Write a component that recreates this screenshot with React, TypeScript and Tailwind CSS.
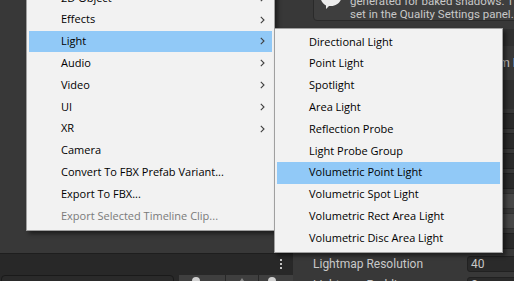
import { ReactNode } from 'react';

const mainItems = [
  { label: '2D Object', sub: true },
  { label: 'Effects', sub: true },
  { label: 'Light', sub: true, active: true },
  { label: 'Audio', sub: true },
  { label: 'Video', sub: true },
  { label: 'UI', sub: true },
  { label: 'XR', sub: true },
  { label: 'Camera' },
  { label: 'Convert To FBX Prefab Variant...' },
  { label: 'Export To FBX...' },
  { label: 'Export Selected Timeline Clip...', disabled: true },
];

const lightItems = [
  'Directional Light',
  'Point Light',
  'Spotlight',
  'Area Light',
  'Reflection Probe',
  'Light Probe Group',
  'Volumetric Point Light',
  'Volumetric Spot Light',
  'Volumetric Rect Area Light',
  'Volumetric Disc Area Light',
];

function Chevron() {
  return (
    <svg width="5" height="8" viewBox="0 0 5 8" className="shrink-0">
      <path d="M0.8 0.8 L4 4 L0.8 7.2" fill="none" stroke="#404040" strokeWidth="1.1" />
    </svg>
  );
}

function MenuRow({ children, active, disabled }: { children: ReactNode; active?: boolean; disabled?: boolean }) {
  return (
    <div
      className={`mx-[2px] h-[21.8px] flex items-center justify-between pl-[32px] pr-[7px] ${
        active ? 'bg-[#91c9f7]' : ''
      } ${disabled ? 'text-[#7a7a7a]' : 'text-black'}`}
    >
      {children}
    </div>
  );
}

function Field({ text, light }: { text?: string; light?: boolean }) {
  return (
    <div
      className={`h-[16px] w-full shrink-0 rounded-[3px] border px-[3px] text-[12px] leading-[14px] ${
        light ? 'bg-[#464646] border-[#303030]' : 'bg-[#2a2a2a] border-[#212121]'
      }`}
    >
      {text}
    </div>
  );
}

export default function App() {
  return (
    <div className="relative w-[514px] h-[281px] overflow-hidden bg-[#383838] font-['Roboto',sans-serif] text-[#c8c8c8]">
      <div className="flex h-full">
        {/* left: scene / hierarchy */}
        <div className="w-[293px] flex flex-col">
          <div className="flex-1 bg-[#383838]" />
          <div className="h-[21px] border-t border-[#1e1e1e] bg-[#282828] flex items-center justify-end pr-[11px]">
            <div className="flex flex-col gap-[2px]">
              <span className="w-[2px] h-[2px] bg-[#c4c4c4]" />
              <span className="w-[2px] h-[2px] bg-[#c4c4c4]" />
              <span className="w-[2px] h-[2px] bg-[#c4c4c4]" />
            </div>
          </div>
          <div className="h-[7px] bg-[#282828] flex items-start gap-[1px] pt-[1px]">
            <div className="w-[175px] h-[18px] rounded-[4px] border border-[#1a1a1a] bg-[#2a2a2a] ml-[1px]" />
            <div className="w-[3px]" />
            <div className="w-[46px] h-[18px] bg-[#3f3f3f] flex justify-center pt-[2px]">
              <span className="w-[8px] h-[8px] rounded-full bg-[#d0d0d0] -ml-[12px]" />
            </div>
            <div className="w-[33px] h-[18px] bg-[#3f3f3f] flex justify-center pt-[3px]">
              <span className="w-0 h-0 border-x-[4px] border-x-transparent border-b-[6px] border-b-[#8a8a8a]" />
            </div>
            <div className="w-[34px] h-[18px] bg-[#3f3f3f] flex justify-center pt-[2px]">
              <span className="w-[8px] h-[8px] rounded-full bg-[#d0d0d0] -ml-[8px]" />
            </div>
          </div>
        </div>
        <div className="w-[1px] bg-[#232323]" />
        {/* right: inspector */}
        <div className="flex-1 flex flex-col pl-[20px]">
          <div className="shrink-0 -mt-[20px] h-[41px] rounded-[4px] border border-[#2a2a2a] bg-[#3e3e3e] flex items-start gap-[7px] pl-[5px] overflow-hidden">
            {/* only the lower part of the info bubble is in view */}
            <svg width="24" height="9" viewBox="0 18 24 9" className="shrink-0 h-[9px] w-[24px] mt-[19px]">
              <path d="M12 1 C18.5 1 23 6 23 12.5 C23 19 18.5 24 12 24 L10 24 L7 27 L7 23.5 C3.5 22 1 17.5 1 12.5 C1 6 5.5 1 12 1 Z" fill="#ececec" />
            </svg>
            <div className="pt-[14px] text-[11.5px] leading-[13px] text-[#c8c8c8] whitespace-nowrap">
              <div>generated for baked shadows. The</div>
              <div>set in the Quality Settings panel.</div>
            </div>
          </div>
          <div className="shrink-0 mt-[8px] flex flex-col gap-[4px]">
            <div className="shrink-0 h-[17px] bg-[#303030]" />
            <div className="shrink-0 h-[26px] pl-[155px] flex items-center">
              <div className="text-[12px] whitespace-nowrap">Custom Res</div>
            </div>
            <div className="shrink-0 h-[29px] bg-[#303030]" />
            <div className="shrink-0 pl-[154px] flex flex-col gap-[4px]">
              <Field />
              <Field />
              <Field />
              <Field />
              <Field light />
              <Field light />
              <Field />
            </div>
            <div className="shrink-0 flex items-center h-[17px] mt-[2px]">
              <div className="w-[154px] shrink-0 text-[12px] whitespace-nowrap">Lightmap Resolution</div>
              <Field text="40" />
            </div>
            <div className="shrink-0 flex items-center h-[17px]">
              <div className="w-[154px] shrink-0 text-[12px] whitespace-nowrap">Lightmap Padding</div>
              <Field text="2" />
            </div>
          </div>
        </div>
      </div>

      {/* context menu */}
      <div className="absolute left-[26px] top-[-16px] w-[249px] pt-[2px] pb-[3px] bg-[#f2f2f2] border border-[#a0a0a0] shadow-[3px_3px_4px_rgba(0,0,0,0.45)] font-['Open_Sans',sans-serif] text-[11px]">
        {mainItems.map((it) => (
          <MenuRow key={it.label} active={it.active} disabled={it.disabled}>
            <span className="whitespace-nowrap">{it.label}</span>
            {it.sub && <Chevron />}
          </MenuRow>
        ))}
      </div>

      {/* Light submenu */}
      <div className="absolute left-[274px] top-[28px] w-[229px] pt-[2px] pb-[3px] bg-[#f2f2f2] border border-[#a0a0a0] shadow-[3px_3px_4px_rgba(0,0,0,0.45)] font-['Open_Sans',sans-serif] text-[11px]">
        {lightItems.map((label) => (
          <MenuRow key={label} active={label === 'Volumetric Point Light'}>
            <span className="whitespace-nowrap">{label}</span>
          </MenuRow>
        ))}
      </div>
    </div>
  );
}
